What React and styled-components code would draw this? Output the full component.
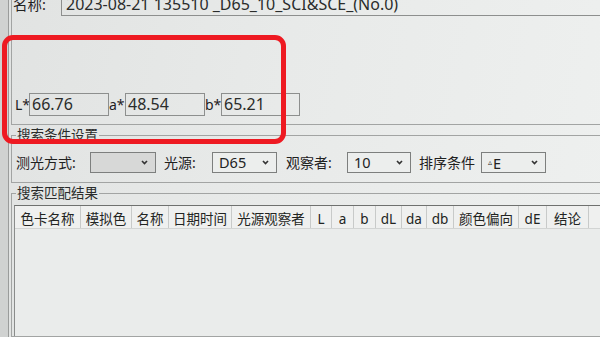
import React from "react";
import styled, { createGlobalStyle } from "styled-components";

const Global = createGlobalStyle`
  html, body { margin: 0; padding: 0; background: #e8eae9; overflow: hidden; }
  body { font-family: "Noto Sans", "Noto Sans CJK SC", sans-serif; color: #1f211f; }
  * { box-sizing: border-box; }
`;

const Screen = styled.div`
  width: 600px;
  height: 337px;
  overflow: hidden;
  position: relative;
  display: flex;
  background: linear-gradient(100deg, #e1e3e2 0%, #e8eae9 45%, #eef0ef 100%);
`;

const WindowEdge = styled.div`
  width: 9px;
  flex: none;
  background: #d0d2d1;
  border-right: 1px solid #9a9c9b;
`;

const Content = styled.div`
  flex: 1;
  min-width: 0;
  display: flex;
  flex-direction: column;
  margin-top: -12px;
  margin-right: -14px;
  padding-left: 2px;
`;

const TopGroup = styled.div`
  height: 137px;
  flex: none;
  border: 1px solid #a2a4a3;
  padding-top: 1px;
  display: flex;
  flex-direction: column;
`;

const NameRow = styled.div`
  display: flex;
  align-items: center;
  height: 26px;
  padding-left: 1px;
`;

const NameLabel = styled.div`
  width: 48px;
  flex: none;
  font-size: 14.5px;
  line-height: 26px;
  padding-top: 2px;
`;

const NameInput = styled.div`
  flex: 1;
  height: 26px;
  border: 1px solid #8d8f8e;
  padding: 2px 0 0 4px;
  font-size: 16px;
  line-height: 22px;
  white-space: nowrap;
  overflow: hidden;
  color: #2a2c2b;
`;

const LabRow = styled.div`
  display: flex;
  height: 23px;
  margin-top: 77px;
  padding-left: 3px;
`;

const AxisLabel = styled.div`
  width: ${(p) => p.$w}px;
  flex: none;
  font-size: 14px;
  line-height: 23px;
`;

const ValueBox = styled.div`
  width: ${(p) => p.$w}px;
  flex: none;
  border: 1px solid #8d8f8e;
  padding-left: 2px;
  font-size: 16px;
  line-height: 21px;
  color: #2a2c2b;
`;

const Group = styled.fieldset`
  margin: 2px 0 0 0;
  padding: ${(p) => p.$pad};
  border: 1px solid #a2a4a3;
  min-width: 0;
  flex: ${(p) => (p.$grow ? "1" : "none")};
  display: flex;
  flex-direction: column;
`;

const Legend = styled.legend`
  padding: 0 1px;
  margin-left: ${(p) => p.$ml || 0}px;
  font-size: 13.5px;
  line-height: 16px;
  color: #2a2c2b;
`;

const FilterRow = styled.div`
  display: flex;
  align-items: center;
  height: 21px;
`;

const RowLabel = styled.div`
  width: ${(p) => p.$w}px;
  margin-left: ${(p) => p.$ml || 0}px;
  flex: none;
  font-size: 14px;
  line-height: 21px;
`;

const SelectBox = styled.div`
  width: ${(p) => p.$w}px;
  height: 21px;
  flex: none;
  border: 1px solid #7d7f7e;
  background: ${(p) => (p.$disabled ? "#d7d8d7" : "#eceeed")};
  display: flex;
  align-items: center;
  justify-content: space-between;
  padding: 0 7px 0 6px;
`;

const SelectText = styled.span`
  font-size: 14.5px;
  line-height: 19px;
  color: #222;
`;

const Delta = styled.span`
  font-size: 8px;
  vertical-align: 4px;
  margin-right: 1px;
`;

const Chevron = () => (
  <svg width="7" height="5" viewBox="0 0 7 5">
    <path d="M1 1 L3.5 3.6 L6 1" fill="none" stroke="#333" strokeWidth="1.6" />
  </svg>
);

const Select = ({ w, disabled, children }) => (
  <SelectBox $w={w} $disabled={disabled}>
    <SelectText>{children}</SelectText>
    <Chevron />
  </SelectBox>
);

const Table = styled.div`
  flex: 1;
  border-top: 1px solid #6f716f;
  border-left: 1px solid #8a8c8b;
  background: #eaeceb;
`;

const HeaderRow = styled.div`
  display: flex;
  height: 23px;
  background: #eff0ef;
  border-bottom: 1px solid #d2d4d3;
`;

const HeadCell = styled.div`
  width: ${(p) => p.$w}px;
  flex: none;
  border-right: 1px solid #c8cac9;
  text-align: center;
  font-size: 13.5px;
  line-height: 22px;
  padding-top: 2px;
  white-space: nowrap;
  color: #222422;
`;

const Highlight = styled.div`
  position: absolute;
  left: 2px;
  top: 35px;
  width: 284px;
  height: 109px;
  border: 5px solid #ee1a22;
  border-radius: 11px;
  pointer-events: none;
`;

const columns = [
  ["色卡名称", 66],
  ["模拟色", 51],
  ["名称", 37],
  ["日期时间", 63],
  ["光源观察者", 79],
  ["L", 21],
  ["a", 22],
  ["b", 22],
  ["dL", 26],
  ["da", 25],
  ["db", 27],
  ["颜色偏向", 65],
  ["dE", 28],
  ["结论", 42],
];

export default function App() {
  return (
    <>
      <Global />
      <Screen>
        <WindowEdge />
        <Content>
          <TopGroup>
            <NameRow>
              <NameLabel>名称:</NameLabel>
              <NameInput>2023-08-21 135510 _D65_10_SCI&amp;SCE_(No.0)</NameInput>
            </NameRow>
            <LabRow>
              <AxisLabel $w={14}>L*</AxisLabel>
              <ValueBox $w={80}>66.76</ValueBox>
              <AxisLabel $w={16}>a*</AxisLabel>
              <ValueBox $w={80}>48.54</ValueBox>
              <AxisLabel $w={16}>b*</AxisLabel>
              <ValueBox $w={79}>65.21</ValueBox>
            </LabRow>
          </TopGroup>

          <Group $pad="9px 0 9px 4px">
            <Legend>搜索条件设置</Legend>
            <FilterRow>
              <RowLabel $w={74}>测光方式:</RowLabel>
              <Select w={66} disabled />
              <RowLabel $w={48} $ml={8}>光源:</RowLabel>
              <Select w={65}>D65</Select>
              <RowLabel $w={61} $ml={9}>观察者:</RowLabel>
              <Select w={64}>10</Select>
              <RowLabel $w={62} $ml={8}>排序条件</RowLabel>
              <Select w={65}>
                <Delta>▵</Delta>E
              </Select>
            </FilterRow>
          </Group>

          <Group $pad="4px 0 0 2px" $grow>
            <Legend $ml={2}>搜索匹配结果</Legend>
            <Table>
              <HeaderRow>
                {columns.map(([t, w]) => (
                  <HeadCell key={t} $w={w}>
                    {t}
                  </HeadCell>
                ))}
              </HeaderRow>
            </Table>
          </Group>
        </Content>
        <Highlight />
      </Screen>
    </>
  );
}
